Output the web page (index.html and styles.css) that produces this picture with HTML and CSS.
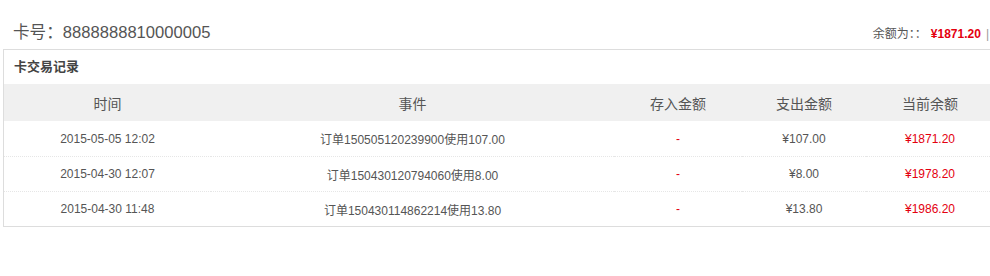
FILE: index.html
```html
<!DOCTYPE html>
<html lang="zh">
<head>
<meta charset="utf-8">
<link rel="stylesheet" href="styles.css">
</head>
<body>
<div class="page">
  <div class="top">
    <div class="card-no">卡号：8888888810000005</div>
    <div class="balance">余额为：：<span class="amt">¥1871.20</span><span class="sep">|</span></div>
  </div>
  <div class="panel">
    <div class="panel-title">卡交易记录</div>
    <table class="records">
      <colgroup>
        <col class="c1"><col class="c2"><col class="c3"><col class="c4"><col class="c5">
      </colgroup>
      <thead>
        <tr><th>时间</th><th>事件</th><th>存入金额</th><th>支出金额</th><th>当前余额</th></tr>
      </thead>
      <tbody>
        <tr><td>2015-05-05 12:02</td><td>订单150505120239900使用107.00</td><td class="red">-</td><td>¥107.00</td><td class="red">¥1871.20</td></tr>
        <tr><td>2015-04-30 12:07</td><td>订单150430120794060使用8.00</td><td class="red">-</td><td>¥8.00</td><td class="red">¥1978.20</td></tr>
        <tr><td>2015-04-30 11:48</td><td>订单150430114862214使用13.80</td><td class="red">-</td><td>¥13.80</td><td class="red">¥1986.20</td></tr>
      </tbody>
    </table>
  </div>
</div>
</body>
</html>
```
FILE: styles.css
```css
html, body { margin: 0; padding: 0; background: #fff; }
body {
  font-family: "Liberation Sans", Arial, "Noto Sans CJK SC", sans-serif;
  color: #555;
  font-size: 12px;
}
.page { padding-left: 3px; width: 1010px; }
.top {
  display: flex;
  justify-content: space-between;
  align-items: flex-end;
  height: 49px;
  box-sizing: border-box;
  padding: 0 0 5px 10px;
  width: 986px;
}
.card-no { font-size: 16.6px; color: #555; line-height: 22px; }
.balance { font-size: 12px; color: #555; line-height: 18px; padding-bottom: 1px; }
.amt { color: #e4000f; font-weight: bold; margin-left: 4px; }
.sep { color: #999; margin-left: 5px; }
.panel {
  border: 1px solid #ddd;
  border-right: none;
  width: 1007px;
}
.panel-title {
  height: 34px;
  line-height: 34px;
  padding-left: 10px;
  font-size: 13px;
  font-weight: bold;
  color: #444;
}
.records { border-collapse: collapse; width: 990px; table-layout: fixed; }
.c1 { width: 207px; }
.c2 { width: 403px; }
.c3 { width: 128px; }
.c4 { width: 124px; }
.c5 { width: 128px; }
.records th {
  background: #f0f0f0;
  height: 37px;
  padding: 0;
  font-weight: normal;
  font-size: 14px;
  color: #555;
  text-align: center;
}
.records td {
  height: 34px;
  padding: 0;
  text-align: center;
  font-size: 12px;
  color: #555;
  border-top: 1px dotted #e6e6e6;
}
.records tbody tr:first-child td { border-top: none; height: 35px; }
.records .red { color: #e4000f; }
```
